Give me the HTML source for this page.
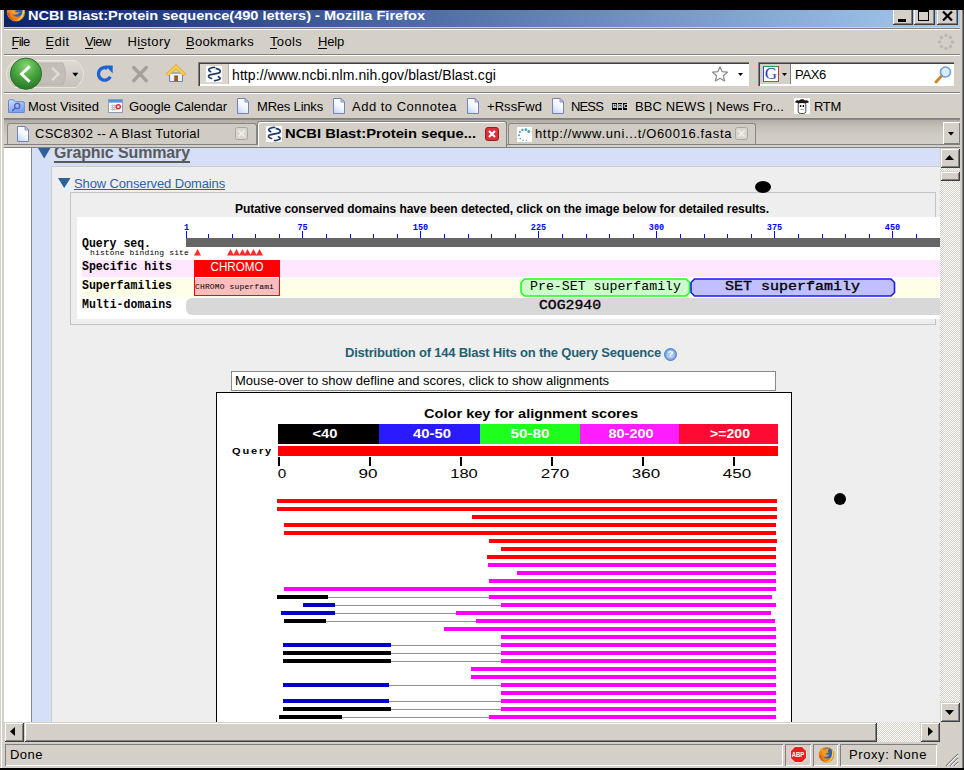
<!DOCTYPE html><html><head><meta charset="utf-8"><title>NCBI Blast:Protein sequence(490 letters) - Mozilla Firefox</title>
<style>html,body{margin:0;padding:0;}body{width:964px;height:770px;overflow:hidden;position:relative;background:#d4d0c8;}#w div,#w span,#w svg{position:absolute;}#w span{white-space:pre;line-height:20px;height:20px;}</style></head><body><div id="w">
<div style="left:0px;top:0px;width:964px;height:10px;background:#000;"></div>
<div style="left:0px;top:10px;width:4px;height:760px;background:#d4d0c8;"></div>
<div style="left:1px;top:10px;width:1px;height:758px;background:#fff;"></div>
<div style="left:960px;top:10px;width:4px;height:760px;background:#d4d0c8;"></div>
<div style="left:962px;top:10px;width:1px;height:758px;background:#808080;"></div>
<div style="left:963px;top:10px;width:1px;height:758px;background:#404040;"></div>
<div style="left:4px;top:10px;width:956px;height:17px;background:linear-gradient(to right,#0a246a 0%,#a6caf0 100%);"></div>
<svg style="left:5.8px;top:2.3px" width="20" height="20" viewBox="0 0 17 17"><circle cx="8.5" cy="8.7" r="7.8" fill="#e8821c"/><circle cx="9.6" cy="7.3" r="5.2" fill="#2a62b8"/><path d="M11.5 2.6 Q9 4.5 10.5 7 Q8.5 6.5 7.5 8 Q9.5 9.2 11.8 8.6 Q10 11.5 6.5 10.8 Q4 10 3.8 6.5 Q2.6 4.8 3.2 2.6 Q4.6 3.2 5.4 4.2 Q7.5 2.2 11.5 2.6 Z" fill="#f29a26"/><path d="M13.8 3.5 Q16.6 7.5 14.6 12 Q12.5 15.8 8 16.2 Q12.5 14.2 13.6 10.5 Q14.6 7 13.8 3.5 Z" fill="#fbd043"/><path d="M1 9 Q1.6 14.2 7.2 16 Q3.6 13.6 3 9.5 Z" fill="#d4580e"/></svg>
<div style="left:0px;top:0px;width:964px;height:10px;background:#000;"></div>
<div style="left:893px;top:10px;width:20px;height:15px;background:#d4d0c8;box-shadow:inset -1px -1px 0 #404040,inset 1px 0 0 #fff,inset -2px -2px 0 #808080;"></div>
<div style="left:914px;top:10px;width:21px;height:15px;background:#d4d0c8;box-shadow:inset -1px -1px 0 #404040,inset 1px 0 0 #fff,inset -2px -2px 0 #808080;"></div>
<div style="left:937px;top:10px;width:21px;height:15px;background:#d4d0c8;box-shadow:inset -1px -1px 0 #404040,inset 1px 0 0 #fff,inset -2px -2px 0 #808080;"></div>
<div style="left:898px;top:19px;width:8px;height:2.5px;background:#000;"></div>
<div style="left:918px;top:10px;width:11px;height:11px;background:transparent;border:1px solid #000;border-top:2px solid #000;box-sizing:border-box;"></div>
<svg style="left:942px;top:11px" width="11" height="10" viewBox="0 0 11 10"><path d="M1 0.5 L10 9.5 M10 0.5 L1 9.5" stroke="#000" stroke-width="2.2"/></svg>
<div style="left:4px;top:28px;width:956px;height:1px;background:#808080;"></div>
<div style="left:4px;top:29px;width:956px;height:1px;background:#fff;"></div>
<div style="left:4px;top:54px;width:956px;height:1px;background:#808080;"></div>
<div style="left:4px;top:55px;width:956px;height:1px;background:#fff;"></div>
<div style="left:12px;top:48px;width:6px;height:1px;background:#000;"></div>
<div style="left:46px;top:48px;width:7px;height:1px;background:#000;"></div>
<div style="left:85px;top:48px;width:8px;height:1px;background:#000;"></div>
<div style="left:138px;top:48px;width:6px;height:1px;background:#000;"></div>
<div style="left:186px;top:48px;width:8px;height:1px;background:#000;"></div>
<div style="left:270px;top:48px;width:7px;height:1px;background:#000;"></div>
<div style="left:318px;top:48px;width:9px;height:1px;background:#000;"></div>
<svg style="left:937px;top:33px" width="18" height="18" viewBox="0 0 18 18"><circle cx="15.50" cy="9.00" r="1.8" fill="#bcb8b0"/><circle cx="13.60" cy="13.59" r="1.8" fill="#bcb8b0"/><circle cx="9.01" cy="15.50" r="1.8" fill="#bcb8b0"/><circle cx="4.41" cy="13.60" r="1.8" fill="#bcb8b0"/><circle cx="2.50" cy="9.01" r="1.8" fill="#bcb8b0"/><circle cx="4.39" cy="4.41" r="1.8" fill="#bcb8b0"/><circle cx="8.98" cy="2.50" r="1.8" fill="#bcb8b0"/><circle cx="13.58" cy="4.39" r="1.8" fill="#bcb8b0"/></svg>
<div style="left:4px;top:92px;width:956px;height:1px;background:#808080;"></div>
<div style="left:4px;top:93px;width:956px;height:1px;background:#fff;"></div>
<svg style="left:5px;top:56px" width="82" height="36" viewBox="5 56 82 36"><defs><radialGradient id="gb" cx="0.5" cy="0.25" r="0.85"><stop offset="0" stop-color="#86d474"/><stop offset="0.45" stop-color="#4aa540"/><stop offset="1" stop-color="#1d6b22"/></radialGradient><linearGradient id="gpg" x1="0.7" y1="0" x2="0.2" y2="1"><stop offset="0" stop-color="#ffffff"/><stop offset="0.5" stop-color="#f2f7ff"/><stop offset="1" stop-color="#c2d8f8"/></linearGradient><linearGradient id="gp" x1="0" y1="0" x2="0" y2="1"><stop offset="0" stop-color="#dedbd4"/><stop offset="1" stop-color="#c6c2ba"/></linearGradient></defs><path d="M14 60.5 H76 Q83.5 67 83.5 74 Q83.5 81 76 87.5 H14 Q6.5 81 6.5 74 Q6.5 67 14 60.5 Z" fill="url(#gp)" stroke="#e9e6e0" stroke-width="1"/><path d="M38 63 H63 Q68 74 63 84.5 H38 Z" fill="#c3bfb7" stroke="#b4b0a8" stroke-width="0.8"/><circle cx="26" cy="73.7" r="15.6" fill="url(#gb)" stroke="#2a742a" stroke-width="1"/><path d="M28.6 67.3 L21.6 74 L28.6 80.7" fill="none" stroke="#fff" stroke-width="3" stroke-linecap="square" stroke-linejoin="miter"/><path d="M53 68.8 L58.6 74 L53 79.2" fill="none" stroke="#dfdcd5" stroke-width="2.4" stroke-linecap="square" stroke-linejoin="miter"/><path d="M72.3 72.8 L78.4 72.8 L75.35 76.4 Z" fill="#000"/></svg>
<svg style="left:94px;top:63px" width="22" height="22" viewBox="94 63 22 22"><path d="M110.3 76.8 A6.3 6.3 0 1 1 107.6 68.2" fill="none" stroke="#1d62d8" stroke-width="3.4"/><path d="M105 65.6 L112.7 65.6 L112.7 73.2 Z" fill="#1d62d8"/></svg>
<svg style="left:130px;top:64px" width="20" height="20" viewBox="130 64 20 20"><path d="M133.7 67.5 L146.3 80.7 M146.3 67.5 L133.7 80.7" stroke="#a3a19a" stroke-width="3.3" stroke-linecap="round"/></svg>
<svg style="left:165px;top:64px" width="22" height="20" viewBox="165 64 22 20"><path d="M169.5 73 H182.5 V81.5 H169.5 Z" fill="#e8f1fb" stroke="#6e82b4" stroke-width="1"/><rect x="174.2" y="75.5" width="3.8" height="6" fill="#a45a22"/><path d="M167.3 75 L176 66.6 L184.7 75" fill="none" stroke="#d9a21e" stroke-width="3.6" stroke-linejoin="miter"/><path d="M167.6 74.6 L176 66.6 L184.4 74.6" fill="none" stroke="#f8d04a" stroke-width="2.2" stroke-linejoin="miter"/></svg>
<div style="left:198px;top:62px;width:551px;height:23.5px;background:#fff;box-shadow:inset 1px 1px 0 #808080,inset 2px 2px 0 #404040,inset -1px -1px 0 #fff;"></div>
<div style="left:200px;top:64px;width:28px;height:19.5px;background:#dcd8d0;"></div>
<div style="left:206px;top:66px;width:16px;height:16px;background:#fff;"></div>
<div style="left:228px;top:64px;width:1px;height:19.5px;background:#b8b4ac;"></div>
<svg style="left:206px;top:66px" width="16" height="16" viewBox="0 0 16 16"><path d="M4.6 5.6 C2 4.6 1.8 2.6 5.5 1.8 C7 1.4 8 1.4 8.7 1.5 M10.4 2.6 C13 3.1 15 4.6 14 6.1 C12.5 8 6 8 3.6 9 C1.6 10 2.5 11.8 5.5 12.5 M12.4 10.7 C14.6 11.6 14.8 13 12.5 13.8 C11 14.4 9.5 14.6 8.6 14.5" fill="none" stroke="#1c3a66" stroke-width="1.7" stroke-linecap="round"/></svg>
<svg style="left:711px;top:65px" width="18" height="18" viewBox="0 0 18 18"><path d="M9 1.8 L11.1 6.7 L16.4 7.2 L12.4 10.7 L13.6 15.9 L9 13.2 L4.4 15.9 L5.6 10.7 L1.6 7.2 L6.9 6.7 Z" fill="#fff" stroke="#8a8a8a" stroke-width="1.2" stroke-linejoin="round"/></svg>
<svg style="left:738.3px;top:73px" width="5" height="3"><path d="M0 0 H5 L2.5 3 Z" fill="#000"/></svg>
<div style="left:758px;top:62px;width:196px;height:23.5px;background:#fff;box-shadow:inset 1px 1px 0 #808080,inset 2px 2px 0 #404040,inset -1px -1px 0 #fff;"></div>
<div style="left:760px;top:64px;width:30px;height:19.5px;background:#d4d0c8;"></div>
<div style="left:790px;top:64px;width:1px;height:19.5px;background:#808080;"></div>
<div style="left:763px;top:66px;width:16px;height:16px;background:#fff;box-sizing:border-box;border:1px solid;border-color:#2a9a3a #c8342b #2a9a3a #2a50c8;"></div>
<svg style="left:782px;top:73px" width="5" height="3"><path d="M0 0 H5 L2.5 3 Z" fill="#000"/></svg>
<svg style="left:934px;top:65px" width="19" height="19" viewBox="0 0 19 19"><path d="M2 17 L8 10.5" stroke="#c98a2a" stroke-width="3" stroke-linecap="round"/><circle cx="11.5" cy="7" r="5" fill="#d6ecfb" stroke="#6a9fd0" stroke-width="1.6"/></svg>
<div style="left:4px;top:118px;width:956px;height:1px;background:#808080;"></div>
<div style="left:4px;top:119px;width:956px;height:1px;background:#8e8a82;"></div>
<svg style="left:8px;top:98.5px" width="17" height="15" viewBox="0 0 17 15"><defs><linearGradient id="gf" x1="0" y1="0" x2="0.3" y2="1"><stop offset="0" stop-color="#d2dffc"/><stop offset="1" stop-color="#7fa2ea"/></linearGradient></defs><path d="M0.5 2 Q0.5 0.8 1.7 0.8 H5.5 L7.5 2.8 H15.3 Q16.3 2.8 16.3 3.8 V13.5 H0.5 Z" fill="url(#gf)" stroke="#5f86dc" stroke-width="1"/><circle cx="9.2" cy="7" r="2.6" fill="none" stroke="#4a62c4" stroke-width="1.3"/><path d="M7.3 9 L4.3 12" stroke="#4a62c4" stroke-width="1.5"/></svg>
<svg style="left:108px;top:99px" width="15" height="14" viewBox="0 0 15 14"><rect x="0.5" y="0.5" width="14" height="13" fill="#fff" stroke="#8e9bb5"/><rect x="1" y="1" width="13" height="2.6" fill="#4a90e2"/><path d="M2.5 6.5 H9 M2.5 8.5 H9 M2.5 10.5 H9 M4.5 5.5 V11.5 M6.7 5.5 V11.5" stroke="#b8b8b8" stroke-width="0.9"/><circle cx="10.3" cy="7.7" r="2" fill="#fff" stroke="#e0262c" stroke-width="1.4"/></svg>
<svg style="left:236px;top:98px" width="14" height="16" viewBox="0 0 14 16"><path d="M1.5 0.5 H9 L12.5 4 V15.5 H1.5 Z" fill="url(#gpg)" stroke="#7a80ba" stroke-width="1"/><path d="M9 0.5 V4 H12.5 Z" fill="#c4d6f6" stroke="#7a80ba" stroke-width="0.8"/></svg>
<svg style="left:332px;top:98px" width="14" height="16" viewBox="0 0 14 16"><path d="M1.5 0.5 H9 L12.5 4 V15.5 H1.5 Z" fill="url(#gpg)" stroke="#7a80ba" stroke-width="1"/><path d="M9 0.5 V4 H12.5 Z" fill="#c4d6f6" stroke="#7a80ba" stroke-width="0.8"/></svg>
<svg style="left:466px;top:98px" width="14" height="16" viewBox="0 0 14 16"><path d="M1.5 0.5 H9 L12.5 4 V15.5 H1.5 Z" fill="url(#gpg)" stroke="#7a80ba" stroke-width="1"/><path d="M9 0.5 V4 H12.5 Z" fill="#c4d6f6" stroke="#7a80ba" stroke-width="0.8"/></svg>
<svg style="left:551px;top:98px" width="14" height="16" viewBox="0 0 14 16"><path d="M1.5 0.5 H9 L12.5 4 V15.5 H1.5 Z" fill="url(#gpg)" stroke="#7a80ba" stroke-width="1"/><path d="M9 0.5 V4 H12.5 Z" fill="#c4d6f6" stroke="#7a80ba" stroke-width="0.8"/></svg>
<div style="left:612px;top:102.5px;width:15px;height:7px;background:#000;"></div>
<div style="left:616.6px;top:102.5px;width:0.8px;height:7px;background:#d4d0c8;"></div>
<div style="left:621.6px;top:102.5px;width:0.8px;height:7px;background:#d4d0c8;"></div>
<svg style="left:794px;top:97px" width="16" height="18" viewBox="0 0 16 18"><rect x="0" y="1" width="16" height="16" fill="#fff"/><rect x="4.2" y="5" width="7.6" height="11.5" rx="2.2" fill="#fff" stroke="#333" stroke-width="0.9"/><path d="M1 5.2 Q2 2.5 5 3.6 Q8 0.8 11 3.6 Q14 2.5 15 5.2 Q12 7 8 6 Q4 7 1 5.2 Z" fill="#1a1a1a"/><circle cx="6.6" cy="9" r="0.9" fill="#000"/><circle cx="9.4" cy="9" r="0.9" fill="#000"/><path d="M6.5 12.5 H9.5" stroke="#888" stroke-width="0.8"/></svg>
<div style="left:4px;top:120px;width:956px;height:27px;background:linear-gradient(to bottom,#b2aea6 0%,#c4c0b8 25%,#d0ccc4 60%,#d4d0c8 100%);"></div>
<div style="left:7px;top:123px;width:250px;height:21px;background:#d0ccc4;border:1px solid #8a877f;border-bottom:none;border-radius:3px 3px 0 0;box-sizing:border-box;"></div>
<svg style="left:16px;top:126px" width="14" height="16" viewBox="0 0 14 16"><path d="M1.5 0.5 H9 L12.5 4 V15.5 H1.5 Z" fill="url(#gpg)" stroke="#7a80ba" stroke-width="1"/><path d="M9 0.5 V4 H12.5 Z" fill="#c4d6f6" stroke="#7a80ba" stroke-width="0.8"/></svg>
<svg style="left:235px;top:127px" width="13" height="13" viewBox="0 0 13 13"><rect x="0.5" y="0.5" width="12" height="12" rx="2" fill="#d9d6cf" stroke="#aaa79f"/><path d="M3.5 3.5 L9.5 9.5 M9.5 3.5 L3.5 9.5" stroke="#f3f1ec" stroke-width="1.6"/></svg>
<div style="left:257px;top:121px;width:250px;height:27px;background:#d4d0c8;border:1px solid #808080;border-bottom:none;border-radius:3px 3px 0 0;box-sizing:border-box;box-shadow:inset 1px 1px 0 #fff;"></div>
<div style="left:266px;top:126px;width:16px;height:16px;background:#fff;"></div>
<svg style="left:266px;top:126px" width="16" height="16" viewBox="0 0 16 16"><path d="M4.6 5.6 C2 4.6 1.8 2.6 5.5 1.8 C7 1.4 8 1.4 8.7 1.5 M10.4 2.6 C13 3.1 15 4.6 14 6.1 C12.5 8 6 8 3.6 9 C1.6 10 2.5 11.8 5.5 12.5 M12.4 10.7 C14.6 11.6 14.8 13 12.5 13.8 C11 14.4 9.5 14.6 8.6 14.5" fill="none" stroke="#1c3a66" stroke-width="1.7" stroke-linecap="round"/></svg>
<svg style="left:485px;top:127px" width="14" height="14" viewBox="0 0 14 14"><rect x="0.5" y="0.5" width="13" height="13" rx="2.5" fill="#d8323c" stroke="#a01820"/><path d="M4 4 L10 10 M10 4 L4 10" stroke="#fff" stroke-width="2"/></svg>
<div style="left:508px;top:123px;width:248px;height:21px;background:#d0ccc4;border:1px solid #8a877f;border-bottom:none;border-radius:3px 3px 0 0;box-sizing:border-box;"></div>
<div style="left:517px;top:127px;width:15px;height:15px;background:#fff;"></div>
<svg style="left:517px;top:126.5px" width="15" height="16" viewBox="0 0 15 16"><circle cx="9.49" cy="13.13" r="0.60" fill="#4a9fb5"/><circle cx="6.10" cy="13.32" r="0.72" fill="#4a9fb5"/><circle cx="3.24" cy="11.48" r="0.84" fill="#4a9fb5"/><circle cx="2.01" cy="8.32" r="0.96" fill="#4a9fb5"/><circle cx="2.87" cy="5.03" r="1.08" fill="#4a9fb5"/><circle cx="5.50" cy="2.88" r="1.20" fill="#4a9fb5"/><circle cx="8.89" cy="2.68" r="1.32" fill="#4a9fb5"/><circle cx="11.75" cy="4.51" r="1.44" fill="#4a9fb5"/></svg>
<svg style="left:735px;top:127px" width="13" height="13" viewBox="0 0 13 13"><rect x="0.5" y="0.5" width="12" height="12" rx="2" fill="#d9d6cf" stroke="#aaa79f"/><path d="M3.5 3.5 L9.5 9.5 M9.5 3.5 L3.5 9.5" stroke="#f3f1ec" stroke-width="1.6"/></svg>
<div style="left:943px;top:122px;width:17px;height:22px;background:#d4d0c8;box-shadow:inset 1px 1px 0 #fff,inset -1px -1px 0 #808080;"></div>
<svg style="left:948px;top:132px" width="6" height="4"><path d="M0 0 H6 L3 3.5 Z" fill="#000"/></svg>
<div style="left:4px;top:144px;width:254px;height:1px;background:#808080;"></div>
<div style="left:507px;top:144px;width:453px;height:1px;background:#808080;"></div>
<div style="left:4px;top:145px;width:254px;height:2px;background:#d4d0c8;"></div>
<div style="left:507px;top:145px;width:453px;height:2px;background:#d4d0c8;"></div>
<div style="left:4px;top:147px;width:956px;height:1px;background:#808080;"></div>
<div style="left:4px;top:148px;width:936px;height:574px;background:#fff;"></div>
<div style="left:31px;top:148px;width:909px;height:574px;background:#d5dff5;"></div>
<div style="left:31px;top:148px;width:1px;height:574px;background:#868686;"></div>
<svg style="left:38px;top:148px" width="13" height="11"><path d="M0 0 H12.5 L6.2 10.5 Z" fill="#2f5f9a"/></svg>
<div style="left:51px;top:166px;width:889px;height:556px;background:#eeeeee;border-left:1px solid #ccc;border-top:1px solid #ccc;box-sizing:border-box;"></div>
<svg style="left:58px;top:178.2px" width="13" height="11"><path d="M0 0 H12.5 L6.2 10 Z" fill="#2f5f9a"/></svg>
<div style="left:70px;top:192px;width:866px;height:133px;background:#eeeeee;border:1px solid #c4c4c4;box-sizing:border-box;"></div>
<div style="left:755px;top:181px;width:16px;height:12px;background:#000;border-radius:50%;"></div>
<div style="left:834px;top:493px;width:12px;height:12px;background:#000;border-radius:50%;"></div>
<div style="left:77px;top:217px;width:863px;height:102px;background:#fff;"></div>
<div style="left:186px;top:231px;width:1px;height:7px;background:#0000ff;"></div>
<div style="left:208px;top:234px;width:1px;height:4px;background:#0000ff;"></div>
<div style="left:232px;top:234px;width:1px;height:4px;background:#0000ff;"></div>
<div style="left:255px;top:234px;width:1px;height:4px;background:#0000ff;"></div>
<div style="left:279px;top:234px;width:1px;height:4px;background:#0000ff;"></div>
<div style="left:302px;top:231px;width:1px;height:7px;background:#0000ff;"></div>
<div style="left:326px;top:234px;width:1px;height:4px;background:#0000ff;"></div>
<div style="left:350px;top:234px;width:1px;height:4px;background:#0000ff;"></div>
<div style="left:373px;top:234px;width:1px;height:4px;background:#0000ff;"></div>
<div style="left:397px;top:234px;width:1px;height:4px;background:#0000ff;"></div>
<div style="left:420px;top:231px;width:1px;height:7px;background:#0000ff;"></div>
<div style="left:444px;top:234px;width:1px;height:4px;background:#0000ff;"></div>
<div style="left:468px;top:234px;width:1px;height:4px;background:#0000ff;"></div>
<div style="left:491px;top:234px;width:1px;height:4px;background:#0000ff;"></div>
<div style="left:515px;top:234px;width:1px;height:4px;background:#0000ff;"></div>
<div style="left:538px;top:231px;width:1px;height:7px;background:#0000ff;"></div>
<div style="left:562px;top:234px;width:1px;height:4px;background:#0000ff;"></div>
<div style="left:586px;top:234px;width:1px;height:4px;background:#0000ff;"></div>
<div style="left:609px;top:234px;width:1px;height:4px;background:#0000ff;"></div>
<div style="left:633px;top:234px;width:1px;height:4px;background:#0000ff;"></div>
<div style="left:656px;top:231px;width:1px;height:7px;background:#0000ff;"></div>
<div style="left:680px;top:234px;width:1px;height:4px;background:#0000ff;"></div>
<div style="left:704px;top:234px;width:1px;height:4px;background:#0000ff;"></div>
<div style="left:727px;top:234px;width:1px;height:4px;background:#0000ff;"></div>
<div style="left:751px;top:234px;width:1px;height:4px;background:#0000ff;"></div>
<div style="left:774px;top:231px;width:1px;height:7px;background:#0000ff;"></div>
<div style="left:798px;top:234px;width:1px;height:4px;background:#0000ff;"></div>
<div style="left:822px;top:234px;width:1px;height:4px;background:#0000ff;"></div>
<div style="left:845px;top:234px;width:1px;height:4px;background:#0000ff;"></div>
<div style="left:869px;top:234px;width:1px;height:4px;background:#0000ff;"></div>
<div style="left:892px;top:231px;width:1px;height:7px;background:#0000ff;"></div>
<div style="left:916px;top:234px;width:1px;height:4px;background:#0000ff;"></div>
<div style="left:940px;top:234px;width:1px;height:4px;background:#0000ff;"></div>
<div style="left:186px;top:238px;width:754px;height:9px;background:#666;"></div>
<svg style="left:194.0px;top:249px" width="7" height="7"><path d="M0 6.5 L3.5 0 L7 6.5 Z" fill="#ff2a2a"/></svg>
<svg style="left:227.0px;top:249px" width="7" height="7"><path d="M0 6.5 L3.5 0 L7 6.5 Z" fill="#ff2a2a"/></svg>
<svg style="left:232.8px;top:249px" width="7" height="7"><path d="M0 6.5 L3.5 0 L7 6.5 Z" fill="#ff2a2a"/></svg>
<svg style="left:238.6px;top:249px" width="7" height="7"><path d="M0 6.5 L3.5 0 L7 6.5 Z" fill="#ff2a2a"/></svg>
<svg style="left:244.4px;top:249px" width="7" height="7"><path d="M0 6.5 L3.5 0 L7 6.5 Z" fill="#ff2a2a"/></svg>
<svg style="left:250.2px;top:249px" width="7" height="7"><path d="M0 6.5 L3.5 0 L7 6.5 Z" fill="#ff2a2a"/></svg>
<svg style="left:256.0px;top:249px" width="7" height="7"><path d="M0 6.5 L3.5 0 L7 6.5 Z" fill="#ff2a2a"/></svg>
<div style="left:82px;top:260px;width:858px;height:17px;background:#ffe8ff;"></div>
<div style="left:82px;top:279px;width:858px;height:17.5px;background:#ffffe8;"></div>
<div style="left:194px;top:260px;width:86px;height:17px;background:#ff0000;"></div>
<div style="left:194px;top:277px;width:86px;height:19px;background:#ffbcbc;border:1px solid #ff0000;border-top:none;box-sizing:border-box;"></div>
<div style="left:195px;top:277px;width:84px;height:1px;background:#fff;"></div>
<div style="left:195px;top:277px;width:1px;height:3px;background:#fff;"></div>
<div style="left:278px;top:277px;width:1px;height:3px;background:#fff;"></div>
<div style="left:186px;top:298px;width:754px;height:17px;background:#d8d8d8;border-radius:6px 0 0 6px;"></div>
<svg style="left:520px;top:278px" width="171" height="19" viewBox="0 0 171 19"><path d="M4.5 1 H166 L169.5 4.5 V14.5 L166 18 H4.5 L1 14.5 V4.5 Z" fill="#ccffcc" stroke="#1eff1e" stroke-width="1.6"/></svg>
<svg style="left:690px;top:278px" width="206" height="19" viewBox="0 0 206 19"><path d="M4.5 1 H201 L204.5 4.5 V14.5 L201 18 H4.5 L1 14.5 V4.5 Z" fill="#c0c0ff" stroke="#1a1aff" stroke-width="1.6"/></svg>
<svg style="left:664px;top:348px" width="13" height="13" viewBox="0 0 13 13"><circle cx="6.5" cy="6.5" r="6" fill="#7aa7e0" stroke="#4a7fc4"/><circle cx="6.5" cy="6.5" r="4" fill="#a9c8f0"/></svg>
<div style="left:231px;top:371px;width:545px;height:20px;background:#fff;border:1px solid #8a8a8a;box-sizing:border-box;"></div>
<div style="left:216px;top:392px;width:576px;height:330px;background:#fff;border:1px solid #000;border-bottom:none;box-sizing:border-box;"></div>
<div style="left:278px;top:424px;width:101px;height:20px;background:#000;"></div>
<div style="left:379px;top:424px;width:100.5px;height:20px;background:#2a1aff;"></div>
<div style="left:479.5px;top:424px;width:100.5px;height:20px;background:#1eff1e;"></div>
<div style="left:580px;top:424px;width:99px;height:20px;background:#ff1eff;"></div>
<div style="left:679px;top:424px;width:99px;height:20px;background:#ff0a32;"></div>
<div style="left:278px;top:446px;width:500px;height:10px;background:#ff0000;"></div>
<div style="left:278px;top:457px;width:2px;height:9px;background:#000;"></div>
<div style="left:369px;top:457px;width:2px;height:9px;background:#000;"></div>
<div style="left:460px;top:457px;width:2px;height:9px;background:#000;"></div>
<div style="left:551px;top:457px;width:2px;height:9px;background:#000;"></div>
<div style="left:642px;top:457px;width:2px;height:9px;background:#000;"></div>
<div style="left:733px;top:457px;width:2px;height:9px;background:#000;"></div>
<div style="left:277px;top:499px;width:500px;height:4px;background:#ff0000;"></div>
<div style="left:277px;top:507px;width:500px;height:4px;background:#ff0000;"></div>
<div style="left:472px;top:515px;width:305px;height:4px;background:#ff0000;"></div>
<div style="left:284px;top:523px;width:492px;height:4px;background:#ff0000;"></div>
<div style="left:284px;top:531px;width:492px;height:4px;background:#ff0000;"></div>
<div style="left:489px;top:539px;width:288px;height:4px;background:#ff0000;"></div>
<div style="left:501px;top:547px;width:275px;height:4px;background:#ff0000;"></div>
<div style="left:487px;top:555px;width:289px;height:4px;background:#ff0000;"></div>
<div style="left:488px;top:563px;width:288px;height:4px;background:#ff00ff;"></div>
<div style="left:517px;top:571px;width:259px;height:4px;background:#ff00ff;"></div>
<div style="left:489px;top:579px;width:287px;height:4px;background:#ff00ff;"></div>
<div style="left:284px;top:587px;width:492px;height:4px;background:#ff00ff;"></div>
<div style="left:328px;top:597px;width:161px;height:1px;background:#909090;"></div>
<div style="left:277px;top:595px;width:51px;height:4px;background:#000;"></div>
<div style="left:489px;top:595px;width:283px;height:4px;background:#ff00ff;"></div>
<div style="left:335px;top:605px;width:166px;height:1px;background:#909090;"></div>
<div style="left:303px;top:603px;width:32px;height:4px;background:#0000c8;"></div>
<div style="left:501px;top:603px;width:275px;height:4px;background:#ff00ff;"></div>
<div style="left:335px;top:613px;width:121px;height:1px;background:#909090;"></div>
<div style="left:281px;top:611px;width:54px;height:4px;background:#0000c8;"></div>
<div style="left:456px;top:611px;width:315px;height:4px;background:#ff00ff;"></div>
<div style="left:326px;top:621px;width:150px;height:1px;background:#909090;"></div>
<div style="left:284px;top:619px;width:42px;height:4px;background:#000;"></div>
<div style="left:476px;top:619px;width:299px;height:4px;background:#ff00ff;"></div>
<div style="left:444px;top:627px;width:332px;height:4px;background:#ff00ff;"></div>
<div style="left:501px;top:635px;width:275px;height:4px;background:#ff00ff;"></div>
<div style="left:391px;top:645px;width:110px;height:1px;background:#909090;"></div>
<div style="left:283px;top:643px;width:108px;height:4px;background:#0000c8;"></div>
<div style="left:501px;top:643px;width:275px;height:4px;background:#ff00ff;"></div>
<div style="left:391px;top:653px;width:110px;height:1px;background:#909090;"></div>
<div style="left:283px;top:651px;width:108px;height:4px;background:#000;"></div>
<div style="left:501px;top:651px;width:275px;height:4px;background:#ff00ff;"></div>
<div style="left:391px;top:661px;width:110px;height:1px;background:#909090;"></div>
<div style="left:283px;top:659px;width:108px;height:4px;background:#000;"></div>
<div style="left:501px;top:659px;width:275px;height:4px;background:#ff00ff;"></div>
<div style="left:471px;top:667px;width:305px;height:4px;background:#ff00ff;"></div>
<div style="left:471px;top:675px;width:305px;height:4px;background:#ff00ff;"></div>
<div style="left:389px;top:685px;width:112px;height:1px;background:#909090;"></div>
<div style="left:283px;top:683px;width:106px;height:4px;background:#0000c8;"></div>
<div style="left:501px;top:683px;width:275px;height:4px;background:#ff00ff;"></div>
<div style="left:501px;top:691px;width:275px;height:4px;background:#ff00ff;"></div>
<div style="left:389px;top:701px;width:112px;height:1px;background:#909090;"></div>
<div style="left:283px;top:699px;width:106px;height:4px;background:#0000c8;"></div>
<div style="left:501px;top:699px;width:275px;height:4px;background:#ff00ff;"></div>
<div style="left:391px;top:709px;width:110px;height:1px;background:#909090;"></div>
<div style="left:283px;top:707px;width:108px;height:4px;background:#000;"></div>
<div style="left:501px;top:707px;width:275px;height:4px;background:#ff00ff;"></div>
<div style="left:342px;top:717px;width:147px;height:1px;background:#909090;"></div>
<div style="left:279px;top:715px;width:63px;height:4px;background:#000;"></div>
<div style="left:489px;top:715px;width:287px;height:4px;background:#ff00ff;"></div>
<div style="left:940px;top:148px;width:20px;height:574px;background:repeating-conic-gradient(#d4d0c8 0% 25%, #fff 0% 50%) 0 0/2px 2px;"></div>
<div style="left:940px;top:148px;width:20px;height:20px;background:#d4d0c8;box-shadow:inset 1px 1px 0 #d4d0c8,inset -1px -1px 0 #404040,inset 2px 2px 0 #fff,inset -2px -2px 0 #808080;"></div>
<svg style="left:945px;top:155px" width="9" height="5"><path d="M0 5 L4.5 0 L9 5 Z" fill="#000"/></svg>
<div style="left:940px;top:171px;width:20px;height:10px;background:#d4d0c8;box-shadow:inset 1px 1px 0 #d4d0c8,inset -1px -1px 0 #404040,inset 2px 2px 0 #fff,inset -2px -2px 0 #808080;"></div>
<div style="left:940px;top:702px;width:20px;height:20px;background:#d4d0c8;box-shadow:inset 1px 1px 0 #d4d0c8,inset -1px -1px 0 #404040,inset 2px 2px 0 #fff,inset -2px -2px 0 #808080;"></div>
<svg style="left:945px;top:710px" width="9" height="5"><path d="M0 0 L4.5 5 L9 0 Z" fill="#000"/></svg>
<div style="left:4px;top:722px;width:956px;height:20px;background:#d4d0c8;"></div>
<div style="left:24px;top:722px;width:896px;height:20px;background:repeating-conic-gradient(#d4d0c8 0% 25%, #fff 0% 50%) 0 0/2px 2px;"></div>
<div style="left:4px;top:722px;width:20px;height:20px;background:#d4d0c8;box-shadow:inset 1px 1px 0 #d4d0c8,inset -1px -1px 0 #404040,inset 2px 2px 0 #fff,inset -2px -2px 0 #808080;"></div>
<svg style="left:10px;top:727px" width="5" height="9"><path d="M5 0 L0 4.5 L5 9 Z" fill="#000"/></svg>
<div style="left:24px;top:722px;width:853px;height:20px;background:#d4d0c8;box-shadow:inset 1px 1px 0 #d4d0c8,inset -1px -1px 0 #404040,inset 2px 2px 0 #fff,inset -2px -2px 0 #808080;"></div>
<div style="left:920px;top:722px;width:20px;height:20px;background:#d4d0c8;box-shadow:inset 1px 1px 0 #d4d0c8,inset -1px -1px 0 #404040,inset 2px 2px 0 #fff,inset -2px -2px 0 #808080;"></div>
<svg style="left:928px;top:727px" width="5" height="9"><path d="M0 0 L5 4.5 L0 9 Z" fill="#000"/></svg>
<div style="left:940px;top:722px;width:20px;height:20px;background:#d4d0c8;"></div>
<div style="left:4px;top:742px;width:956px;height:26px;background:#d4d0c8;"></div>
<div style="left:5px;top:744px;width:778px;height:22px;background:#d4d0c8;box-shadow:inset 1px 1px 0 #808080,inset -1px -1px 0 #fff;"></div>
<div style="left:785px;top:744px;width:26px;height:22px;background:#d4d0c8;box-shadow:inset 1px 1px 0 #808080,inset -1px -1px 0 #fff;"></div>
<div style="left:813px;top:744px;width:25px;height:22px;background:#d4d0c8;box-shadow:inset 1px 1px 0 #808080,inset -1px -1px 0 #fff;"></div>
<div style="left:840px;top:744px;width:97px;height:22px;background:#d4d0c8;box-shadow:inset 1px 1px 0 #808080,inset -1px -1px 0 #fff;"></div>
<svg style="left:789.7px;top:746.2px" width="17" height="17" viewBox="0 0 17 17"><path d="M5 0.5 H12 L16.5 5 V12 L12 16.5 H5 L0.5 12 V5 Z" fill="#ee1c1c" stroke="#fff" stroke-width="0.8"/></svg>
<svg style="left:817.6px;top:746px" width="17" height="17" viewBox="0 0 17 17"><circle cx="8.5" cy="8.7" r="7.8" fill="#e8821c"/><circle cx="9.6" cy="7.3" r="5.2" fill="#2a62b8"/><path d="M11.5 2.6 Q9 4.5 10.5 7 Q8.5 6.5 7.5 8 Q9.5 9.2 11.8 8.6 Q10 11.5 6.5 10.8 Q4 10 3.8 6.5 Q2.6 4.8 3.2 2.6 Q4.6 3.2 5.4 4.2 Q7.5 2.2 11.5 2.6 Z" fill="#f29a26"/><path d="M13.8 3.5 Q16.6 7.5 14.6 12 Q12.5 15.8 8 16.2 Q12.5 14.2 13.6 10.5 Q14.6 7 13.8 3.5 Z" fill="#fbd043"/><path d="M1 9 Q1.6 14.2 7.2 16 Q3.6 13.6 3 9.5 Z" fill="#d4580e"/></svg>
<svg style="left:944px;top:752px" width="15" height="15" viewBox="0 0 15 15"><path d="M14 2 L2 14 M14 6 L6 14 M14 10 L10 14" stroke="#808080" stroke-width="1.2"/><path d="M14 3.2 L3.2 14 M14 7.2 L7.2 14 M14 11.2 L11.2 14" stroke="#fff" stroke-width="1"/></svg>
<div style="left:0px;top:768px;width:964px;height:2px;background:#000;"></div>
<span style='left:28px;top:5.800000000000001px;font:bold 13px/20px "Liberation Sans", sans-serif;color:#fff;transform-origin:0 50%;transform:scaleX(1.1192);'>NCBI Blast:Protein sequence(490 letters) - Mozilla Firefox</span>
<span style='left:11.5px;top:32px;font:normal 13px/20px "Liberation Sans", sans-serif;color:#000;letter-spacing:-0.738px;'>File</span>
<span style='left:45.5px;top:32px;font:normal 13px/20px "Liberation Sans", sans-serif;color:#000;letter-spacing:0.398px;'>Edit</span>
<span style='left:85px;top:32px;font:normal 13px/20px "Liberation Sans", sans-serif;color:#000;letter-spacing:-0.488px;'>View</span>
<span style='left:127.5px;top:32px;font:normal 13px/20px "Liberation Sans", sans-serif;color:#000;letter-spacing:0.364px;'>History</span>
<span style='left:186px;top:32px;font:normal 13px/20px "Liberation Sans", sans-serif;color:#000;letter-spacing:0.330px;'>Bookmarks</span>
<span style='left:270px;top:32px;font:normal 13px/20px "Liberation Sans", sans-serif;color:#000;letter-spacing:0.328px;'>Tools</span>
<span style='left:318px;top:32px;font:normal 13px/20px "Liberation Sans", sans-serif;color:#000;letter-spacing:-0.188px;'>Help</span>
<span style='left:232px;top:64.5px;font:normal 14px/20px "Liberation Sans", sans-serif;color:#000;letter-spacing:0.095px;'>http://www.ncbi.nlm.nih.gov/blast/Blast.cgi</span>
<span style='left:771px;top:64.3px;font:normal 17px/20px "Liberation Serif", serif;color:#1f3fc4;transform:translateX(-50%);'>G</span>
<span style='left:795px;top:64.5px;font:normal 13px/20px "Liberation Sans", sans-serif;color:#000;letter-spacing:-0.320px;'>PAX6</span>
<span style='left:28px;top:96.5px;font:normal 13px/20px "Liberation Sans", sans-serif;color:#000;letter-spacing:0.035px;'>Most Visited</span>
<span style='left:129px;top:96.5px;font:normal 13px/20px "Liberation Sans", sans-serif;color:#000;letter-spacing:-0.020px;'>Google Calendar</span>
<span style='left:257px;top:96.5px;font:normal 13px/20px "Liberation Sans", sans-serif;color:#000;letter-spacing:-0.192px;'>MRes Links</span>
<span style='left:352px;top:96.5px;font:normal 13px/20px "Liberation Sans", sans-serif;color:#000;letter-spacing:0.495px;'>Add to Connotea</span>
<span style='left:487px;top:96.5px;font:normal 13px/20px "Liberation Sans", sans-serif;color:#000;letter-spacing:0.065px;'>+RssFwd</span>
<span style='left:571px;top:96.5px;font:normal 13px/20px "Liberation Sans", sans-serif;color:#000;letter-spacing:-0.852px;'>NESS</span>
<span style='left:612.4px;top:96px;font:bold 6px/20px "Liberation Sans", sans-serif;color:#fff;letter-spacing:-0.670px;letter-spacing:1.2px;'>BBC</span>
<span style='left:635px;top:96.5px;font:normal 13px/20px "Liberation Sans", sans-serif;color:#000;letter-spacing:0.118px;'>BBC NEWS | News Fro...</span>
<span style='left:814px;top:96.5px;font:normal 13px/20px "Liberation Sans", sans-serif;color:#000;letter-spacing:-0.312px;'>RTM</span>
<span style='left:35px;top:123.5px;font:normal 13px/20px "Liberation Sans", sans-serif;color:#000;letter-spacing:0.250px;'>CSC8302 -- A Blast Tutorial</span>
<span style='left:285px;top:123.5px;font:bold 13px/20px "Liberation Sans", sans-serif;color:#000;transform-origin:0 50%;transform:scaleX(1.1348);'>NCBI Blast:Protein seque...</span>
<span style='left:535px;top:123.5px;font:normal 13px/20px "Liberation Sans", sans-serif;color:#000;letter-spacing:0.644px;'>http://www.uni...t/O60016.fasta</span>
<span style='left:54px;top:143.4px;font:bold 16px/20px "Liberation Sans", sans-serif;color:#5a5a5a;letter-spacing:-0.122px;text-decoration:underline;text-underline-offset:3px;text-decoration-thickness:2px;text-decoration-skip-ink:none;clip-path:inset(4.6px 0 0 0);'>Graphic Summary</span>
<span style='left:74px;top:173.7px;font:normal 13px/20px "Liberation Sans", sans-serif;color:#2d63ad;letter-spacing:-0.132px;text-decoration:underline;text-decoration-skip-ink:none;'>Show Conserved Domains</span>
<span style='left:502px;top:198.5px;font:bold 12px/20px "Liberation Sans", sans-serif;color:#000;letter-spacing:-0.059px;transform:translateX(-50%);'>Putative conserved domains have been detected, click on the image below for detailed results.</span>
<span style='left:186.5px;top:217.8px;font:bold 8.5px/20px "Liberation Mono", monospace;color:#0000ff;transform:translateX(-50%);'>1</span>
<span style='left:302.5px;top:217.8px;font:bold 8.5px/20px "Liberation Mono", monospace;color:#0000ff;transform:translateX(-50%);'>75</span>
<span style='left:420.5px;top:217.8px;font:bold 8.5px/20px "Liberation Mono", monospace;color:#0000ff;transform:translateX(-50%);'>150</span>
<span style='left:538.5px;top:217.8px;font:bold 8.5px/20px "Liberation Mono", monospace;color:#0000ff;transform:translateX(-50%);'>225</span>
<span style='left:656.5px;top:217.8px;font:bold 8.5px/20px "Liberation Mono", monospace;color:#0000ff;transform:translateX(-50%);'>300</span>
<span style='left:774.5px;top:217.8px;font:bold 8.5px/20px "Liberation Mono", monospace;color:#0000ff;transform:translateX(-50%);'>375</span>
<span style='left:892.5px;top:217.8px;font:bold 8.5px/20px "Liberation Mono", monospace;color:#0000ff;transform:translateX(-50%);'>450</span>
<span style='left:82px;top:234.4px;font:bold 12.5px/20px "Liberation Mono", monospace;color:#000;transform-origin:0 50%;transform:scaleX(0.9198);'>Query seq.</span>
<span style='left:90px;top:243px;font:normal 8px/20px "Liberation Mono", monospace;color:#000;letter-spacing:0.149px;'>histone binding site</span>
<span style='left:82px;top:257.4px;font:bold 12.5px/20px "Liberation Mono", monospace;color:#000;transform-origin:0 50%;transform:scaleX(0.9228);'>Specific hits</span>
<span style='left:82px;top:276.4px;font:bold 12.5px/20px "Liberation Mono", monospace;color:#000;transform-origin:0 50%;transform:scaleX(0.9228);'>Superfamilies</span>
<span style='left:82px;top:295.4px;font:bold 12.5px/20px "Liberation Mono", monospace;color:#000;transform-origin:0 50%;transform:scaleX(0.9228);'>Multi-domains</span>
<span style='left:236.6px;top:256.8px;font:normal 13px/20px "Liberation Sans", sans-serif;color:#fff;transform-origin:50% 50%;transform:translateX(-50%) scaleX(0.8950);'>CHROMO</span>
<span style='left:195px;top:276.5px;font:normal 8px/20px "Liberation Mono", monospace;color:#000;letter-spacing:0.137px;'>CHROMO superfami</span>
<span style='left:539px;top:295.5px;font:normal 13px/20px "Liberation Mono", monospace;color:#000;transform-origin:0 50%;transform:scaleX(1.1353);-webkit-text-stroke:0.35px #000;'>COG2940</span>
<span style='left:530px;top:276.5px;font:normal 13px/20px "Liberation Mono", monospace;color:#000;transform-origin:0 50%;transform:scaleX(1.0187);'>Pre-SET superfamily</span>
<span style='left:724.5px;top:276.5px;font:normal 13px/20px "Liberation Mono", monospace;color:#000;transform-origin:0 50%;transform:scaleX(1.1535);-webkit-text-stroke:0.35px #000;'>SET superfamily</span>
<span style='left:503px;top:342.9px;font:bold 13px/20px "Liberation Sans", sans-serif;color:#1f6172;letter-spacing:-0.202px;transform:translateX(-50%);'>Distribution of 144 Blast Hits on the Query Sequence</span>
<span style='left:670.5px;top:344px;font:bold 9px/20px "Liberation Sans", sans-serif;color:#fff;transform:translateX(-50%);'>?</span>
<span style='left:235px;top:371px;font:normal 13px/20px "Liberation Sans", sans-serif;color:#000;letter-spacing:0.007px;'>Mouse-over to show defline and scores, click to show alignments</span>
<span style='left:531px;top:404px;font:bold 13px/20px "Liberation Sans", sans-serif;color:#000;transform-origin:50% 50%;transform:translateX(-50%) scaleX(1.1220);'>Color key for alignment scores</span>
<span style='left:324.5px;top:424px;font:bold 12px/20px "Liberation Sans", sans-serif;color:#fff;transform-origin:50% 50%;transform:translateX(-50%) scaleX(1.2279);'>&lt;40</span>
<span style='left:431.5px;top:424px;font:bold 12px/20px "Liberation Sans", sans-serif;color:#fff;transform-origin:50% 50%;transform:translateX(-50%) scaleX(1.2377);'>40-50</span>
<span style='left:530px;top:424px;font:bold 12px/20px "Liberation Sans", sans-serif;color:#fff;transform-origin:50% 50%;transform:translateX(-50%) scaleX(1.2702);'>50-80</span>
<span style='left:631.3px;top:424px;font:bold 12px/20px "Liberation Sans", sans-serif;color:#fff;transform-origin:50% 50%;transform:translateX(-50%) scaleX(1.2040);'>80-200</span>
<span style='left:729.7px;top:424px;font:bold 12px/20px "Liberation Sans", sans-serif;color:#fff;transform-origin:50% 50%;transform:translateX(-50%) scaleX(1.1749);'>&gt;=200</span>
<span style='left:232.4px;top:441px;font:bold 9px/20px "Liberation Sans", sans-serif;color:#000;transform-origin:0 50%;transform:scaleX(1.2233);letter-spacing:1.5px;'>Query</span>
<span style='left:281.9px;top:464px;font:normal 12px/20px "Liberation Sans", sans-serif;color:#000;transform-origin:50% 50%;transform:translateX(-50%) scaleX(1.2710);'>0</span>
<span style='left:368.4px;top:464px;font:normal 12px/20px "Liberation Sans", sans-serif;color:#000;transform-origin:50% 50%;transform:translateX(-50%) scaleX(1.4222);'>90</span>
<span style='left:464.4px;top:464px;font:normal 12px/20px "Liberation Sans", sans-serif;color:#000;transform-origin:50% 50%;transform:translateX(-50%) scaleX(1.3729);'>180</span>
<span style='left:555px;top:464px;font:normal 12px/20px "Liberation Sans", sans-serif;color:#000;transform-origin:50% 50%;transform:translateX(-50%) scaleX(1.4128);'>270</span>
<span style='left:646px;top:464px;font:normal 12px/20px "Liberation Sans", sans-serif;color:#000;transform-origin:50% 50%;transform:translateX(-50%) scaleX(1.4128);'>360</span>
<span style='left:737px;top:464px;font:normal 12px/20px "Liberation Sans", sans-serif;color:#000;transform-origin:50% 50%;transform:translateX(-50%) scaleX(1.4128);'>450</span>
<span style='left:10px;top:744.5px;font:normal 13px/20px "Liberation Sans", sans-serif;color:#000;letter-spacing:0.480px;'>Done</span>
<span style='left:798.2px;top:744.8px;font:bold 8px/20px "Liberation Sans", sans-serif;color:#fff;transform-origin:50% 50%;transform:translateX(-50%) scaleX(0.7460);'>ABP</span>
<span style='left:849px;top:744.5px;font:normal 13px/20px "Liberation Sans", sans-serif;color:#000;letter-spacing:0.587px;'>Proxy: None</span>
</div></body></html>
